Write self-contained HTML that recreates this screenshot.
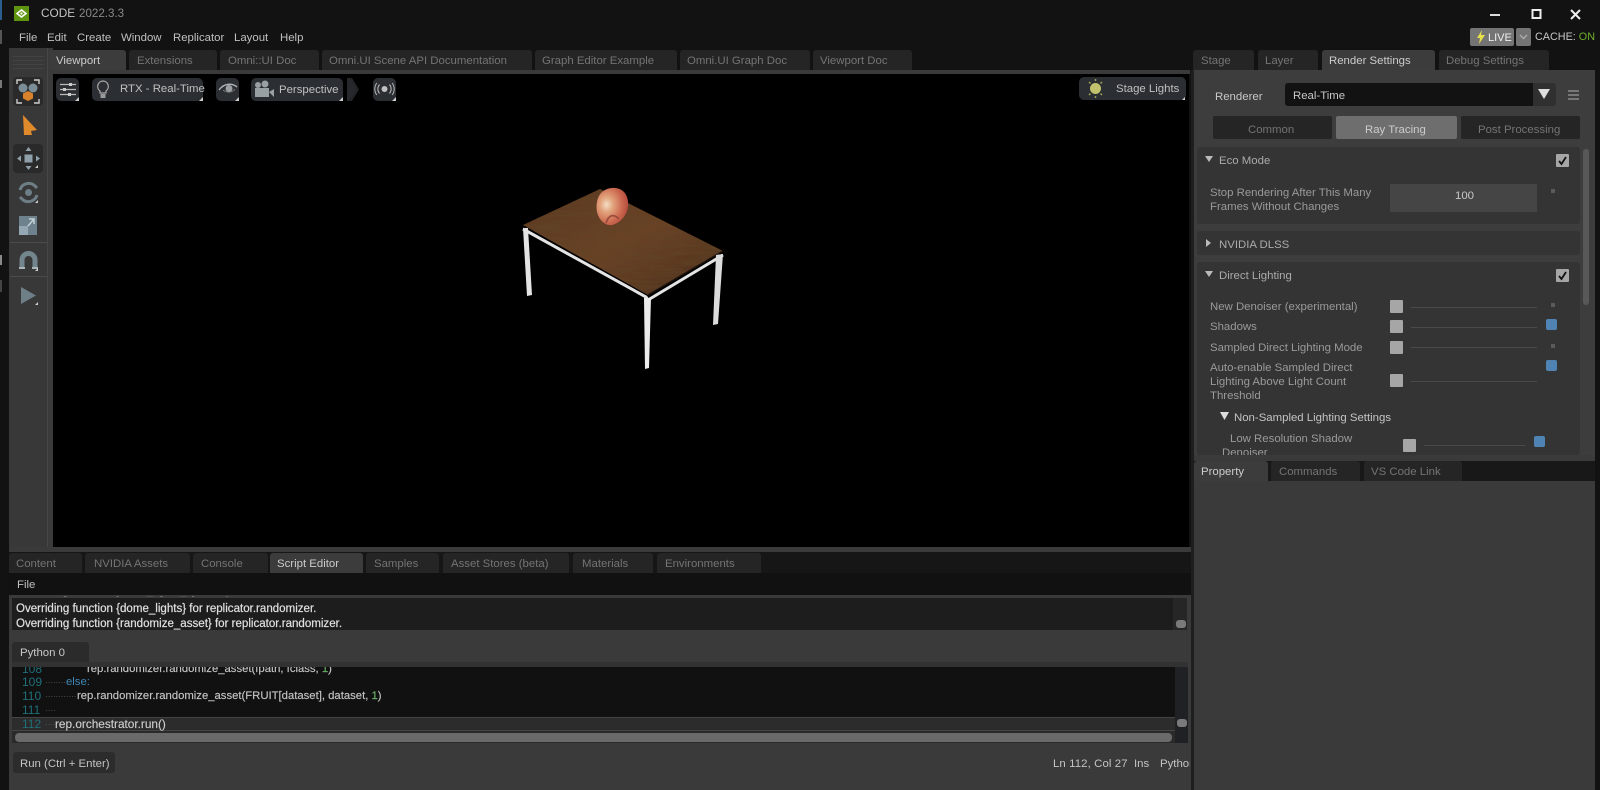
<!DOCTYPE html>
<html><head><meta charset="utf-8"><style>
html,body{margin:0;padding:0;background:#121212;width:1600px;height:790px;overflow:hidden}
body{position:relative;font-family:"Liberation Sans",sans-serif;font-size:11.4px;color:#b8b8b8}
div,span.t{position:absolute;box-sizing:border-box}
.t{line-height:16px;white-space:nowrap;font-size:11.4px;position:absolute;margin-top:1px}
.t.n,.t.code,.t.num,.t.ws{margin-top:0}
.tab{height:20px;background:#252525;border-radius:3px 3px 0 0}
.tab.on{background:#3c3c3c}
.tl{color:#747474}.tw{color:#cccccc}
.tb{background:#2b2e32;border-radius:5px;height:23px;top:78px}
.cn{width:0;height:0;border-bottom:4px solid #ccc;border-left:4px solid transparent}
.cb{width:13px;height:13px;background:#a6a6a6;border-radius:1px}
.bl{width:11px;height:11px;background:#4f83b3;border-radius:2px}
.ln{height:1px;background:#4a4a4a}
.dot{width:4px;height:4px;background:#5a5a5a}
.code{font-size:11.3px;color:#c4c4c4;-webkit-text-stroke:.15px #c4c4c4}
.num{color:#1f6f7a;font-size:12px}
.ws{color:#505050;letter-spacing:-.4px;font-size:9px}
.lb{color:#9a9a9a}
.hd{color:#ababab}
</style></head><body>

<!-- left sliver -->
<div style="left:0;top:0;width:2px;height:20px;background:#2a5c8c"></div>
<div style="left:0;top:30px;width:2px;height:14px;background:#555"></div>
<div style="left:0;top:80px;width:2px;height:8px;background:#777"></div>
<div style="left:0;top:255px;width:2px;height:10px;background:#888"></div>
<div style="left:0;top:280px;width:2px;height:12px;background:#444"></div>

<!-- Title bar -->
<svg style="position:absolute;left:14px;top:6px" width="15" height="15"><rect width="15" height="15" fill="#5f9410"/><path d="M3 7.5L7.5 4 12 7.5 7.5 11z" fill="none" stroke="#fff" stroke-width="1.6"/><circle cx="7.5" cy="7.5" r="1.1" fill="#fff"/></svg>
<span class="t n" style="left:41px;top:5px;font-size:11.8px;color:#c4c4c4">CODE</span>
<span class="t" style="left:79px;top:5px;font-size:11.6px;color:#888">2022.3.3</span>
<span class="t n" style="left:19px;top:30px;color:#c0c0c0">File</span>
<span class="t n" style="left:47px;top:30px;color:#c0c0c0">Edit</span>
<span class="t n" style="left:77px;top:30px;color:#c0c0c0">Create</span>
<span class="t n" style="left:121px;top:30px;color:#c0c0c0">Window</span>
<span class="t n" style="left:173px;top:30px;color:#c0c0c0">Replicator</span>
<span class="t n" style="left:234px;top:30px;color:#c0c0c0">Layout</span>
<span class="t n" style="left:280px;top:30px;color:#c0c0c0">Help</span>

<svg style="position:absolute;left:1485px;top:6px" width="105" height="16"><path d="M5 9h10" stroke="#ddd" stroke-width="2"/><rect x="47.5" y="4" width="8" height="8" fill="none" stroke="#eee" stroke-width="2"/><path d="M86 4l9 9M95 4l-9 9" stroke="#eee" stroke-width="2"/></svg>
<div style="left:1470px;top:28px;width:44px;height:18px;background:#747474;border-radius:2px"></div>
<svg style="position:absolute;left:1476px;top:30px" width="10" height="14"><path d="M6 0L1 8h3L3 14 9 5H5z" fill="#e6e04a"/></svg>
<span class="t" style="left:1488px;top:29px;color:#eee;font-size:11px">LIVE</span>
<div style="left:1516px;top:28px;width:15px;height:18px;background:#747474;border-radius:2px"></div>
<svg style="position:absolute;left:1519px;top:34px" width="9" height="6"><path d="M1 1l3.5 3.5L8 1" fill="none" stroke="#aaa" stroke-width="1.5"/></svg>
<span class="t n" style="left:1535px;top:29px;color:#c8c8c8;font-size:10.8px">CACHE: <span style="color:#6fae2c">ON</span></span>

<!-- Left toolbar -->
<div style="left:9px;top:48px;width:44px;height:504px;background:#3a3a3a"></div>
<div style="left:9px;top:48px;width:39px;height:504px;background:#383838;border-right:1px solid #464646"></div>
<div style="left:13px;top:56px;width:31px;height:1px;background:#434343;box-shadow:0 4px #434343,0 8px #434343,0 12px #434343"></div>
<div style="left:13px;top:77px;width:30px;height:29px;background:#2a2a2a;border-radius:4px"></div>
<svg style="position:absolute;left:13px;top:77px" width="30" height="29"><path d="M4 7V3h5M21 3h5v4M4 22v4h5M21 26h5v-4" fill="none" stroke="#cfcfcf" stroke-width="1.4"/><circle cx="10" cy="11" r="4.5" fill="#7b8d97"/><circle cx="20" cy="11" r="4.5" fill="#7b8d97"/><path d="M15 14l5 2.5v5L15 24l-5-2.5v-5z" fill="#d9822b"/></svg>
<svg style="position:absolute;left:20px;top:114px" width="18" height="24"><path d="M3 1L17 16L11 17L12 21L4 21Z" fill="#e08a2c"/></svg>
<div style="left:13px;top:144px;width:30px;height:29px;background:#2a2a2a;border-radius:4px"></div>
<svg style="position:absolute;left:17px;top:147px" width="23" height="23"><rect x="7.5" y="7.5" width="8" height="8" fill="#8fa0aa"/><path d="M11.5 0l3 4h-6zM11.5 23l3-4h-6zM0 11.5l4-3v6zM23 11.5l-4-3v6z" fill="#8fa0aa"/></svg>
<svg style="position:absolute;left:17px;top:181px" width="23" height="23"><path d="M3 9a9 9 0 0 1 15-4l2 2M20 14a9 9 0 0 1-15 4l-2-2" fill="none" stroke="#6e7e86" stroke-width="3"/><circle cx="11.5" cy="11.5" r="3.5" fill="#6e7e86"/></svg>
<svg style="position:absolute;left:19px;top:216px" width="18" height="19"><rect width="18" height="19" fill="#6d828c"/><rect width="9" height="9" x="0" y="10" fill="#93a8b2"/><path d="M9 10l6-7M10 3h5v5" fill="none" stroke="#c4d0d6" stroke-width="1.5"/></svg>
<div style="left:10px;top:242px;width:37px;height:1px;background:#4b4b4b"></div>
<svg style="position:absolute;left:19px;top:250px" width="19" height="21"><path d="M3 17V10a6.5 6.5 0 0 1 13 0v7" fill="none" stroke="#74868d" stroke-width="5"/><path d="M0 18h6M13 18h6" stroke="#aab6bb" stroke-width="2"/></svg>
<div style="left:10px;top:276px;width:37px;height:1px;background:#4b4b4b"></div>
<svg style="position:absolute;left:20px;top:286px" width="17" height="19"><path d="M1 1l15 8.5L1 18z" fill="#6e7f88"/></svg>
<div class="cn" style="left:35px;top:165px;border-bottom-width:3px;border-left-width:3px"></div>
<div class="cn" style="left:35px;top:200px;border-bottom-width:3px;border-left-width:3px"></div>
<div class="cn" style="left:35px;top:268px;border-bottom-width:3px;border-left-width:3px"></div>
<div class="cn" style="left:35px;top:302px;border-bottom-width:3px;border-left-width:3px"></div>

<!-- Top tabs -->
<div style="left:49px;top:70px;width:1141px;height:4px;background:#3a3a3a"></div>
<div class="tab on" style="left:49px;top:50px;width:77px"></div><span class="t tw" style="left:56px;top:52px">Viewport</span>
<div class="tab" style="left:129px;top:50px;width:88px"></div><span class="t tl" style="left:137px;top:52px">Extensions</span>
<div class="tab" style="left:220px;top:50px;width:99px"></div><span class="t tl" style="left:228px;top:52px">Omni::UI Doc</span>
<div class="tab" style="left:322px;top:50px;width:210px"></div><span class="t tl" style="left:329px;top:52px">Omni.UI Scene API Documentation</span>
<div class="tab" style="left:535px;top:50px;width:142px"></div><span class="t tl" style="left:542px;top:52px">Graph Editor Example</span>
<div class="tab" style="left:680px;top:50px;width:130px"></div><span class="t tl" style="left:687px;top:52px">Omni.UI Graph Doc</span>
<div class="tab" style="left:813px;top:50px;width:99px"></div><span class="t tl" style="left:820px;top:52px">Viewport Doc</span>

<!-- Viewport -->
<div style="left:53px;top:74px;width:1136px;height:473px;background:#000"></div>
<div class="tb" style="left:56px;width:23px"></div>
<svg style="position:absolute;left:59px;top:82px" width="18" height="15"><path d="M1 2.5h16M1 7.5h16M1 12.5h16" stroke="#bbb" stroke-width="1.3"/><rect x="10" y="1" width="3" height="3" fill="#ccc"/><rect x="4" y="6" width="3" height="3" fill="#ccc"/><rect x="9" y="11" width="3" height="3" fill="#ccc"/></svg>
<div class="tb" style="left:92px;width:111px"></div>
<svg style="position:absolute;left:96px;top:80px" width="14" height="19"><path d="M7 1a5.5 5.5 0 0 0-3 10v2h6v-2A5.5 5.5 0 0 0 7 1z" fill="none" stroke="#aaa" stroke-width="1.2"/><rect x="4.5" y="14" width="5" height="4" fill="#999"/></svg>
<span class="t n" style="left:120px;top:81px;color:#c0c0c0">RTX - Real-Time</span>
<div class="tb" style="left:216px;width:23px"></div>
<svg style="position:absolute;left:218px;top:82px" width="20" height="14"><path d="M1 8C6 1 14 1 19 5" fill="none" stroke="#aab0b4" stroke-width="1.5"/><path d="M5 8C9 11 14 11 17 7" fill="none" stroke="#777" stroke-width="1"/><circle cx="11" cy="6.5" r="3.5" fill="#9aa0a4"/></svg>
<div class="tb" style="left:251px;width:92px"></div>
<svg style="position:absolute;left:253px;top:80px" width="21" height="19"><circle cx="5" cy="5" r="3" fill="#98a0a4"/><circle cx="12" cy="4" r="3.5" fill="#98a0a4"/><rect x="2" y="8" width="14" height="9" fill="#98a0a4"/><path d="M16 12l5-3v8z" fill="#98a0a4"/></svg>
<span class="t n" style="left:279px;top:82px;color:#c0c0c0">Perspective</span>
<svg style="position:absolute;left:346px;top:78px" width="16" height="23"><path d="M1 0h3l7 11.5L4 23H1z" fill="#26282b"/><path d="M5 0l7 11.5L5 23" fill="none" stroke="#26282b" stroke-width="1.5"/></svg>
<div class="tb" style="left:373px;width:23px"></div>
<svg style="position:absolute;left:374px;top:82px" width="21" height="14"><circle cx="10.5" cy="7" r="3" fill="#c0c0c0"/><path d="M5.5 2.5a7 7 0 0 0 0 9M15.5 2.5a7 7 0 0 1 0 9M2.8 1a10 10 0 0 0 0 12M18.2 1a10 10 0 0 1 0 12" fill="none" stroke="#bbb" stroke-width="1"/></svg>
<div class="tb" style="left:1079px;width:107px;top:77px"></div>
<svg style="position:absolute;left:1086px;top:79px" width="19" height="19"><circle cx="9.5" cy="9.5" r="5.5" fill="#c2c26c"/><path d="M9.5 0v2M9.5 17v2M3 3l1.5 1.5M16 3l-1.5 1.5M3 16l1.5-1.5M16 16l-1.5-1.5" stroke="#9c9c54" stroke-width="1.5"/></svg>
<span class="t n" style="left:1116px;top:81px;color:#c0c0c0">Stage Lights</span>
<div class="cn" style="left:75px;top:97px"></div><div class="cn" style="left:199px;top:97px"></div><div class="cn" style="left:235px;top:97px"></div><div class="cn" style="left:339px;top:97px"></div><div class="cn" style="left:392px;top:97px"></div><div class="cn" style="left:1182px;top:97px;border-bottom-width:3px;border-left-width:3px"></div>

<!-- Table and apple -->
<svg style="position:absolute;left:0;top:0" width="1600" height="790">
<defs>
<linearGradient id="w" x1="0" y1="0" x2="1" y2="1"><stop offset="0" stop-color="#563622"/><stop offset=".5" stop-color="#6c4328"/><stop offset="1" stop-color="#472c1c"/></linearGradient>
<radialGradient id="a" cx=".32" cy=".45" r=".8"><stop offset="0" stop-color="#f4ddc6"/><stop offset=".25" stop-color="#e2a57e"/><stop offset=".6" stop-color="#cc6a50"/><stop offset="1" stop-color="#a83a34"/></radialGradient>
<filter id="g"><feTurbulence type="fractalNoise" baseFrequency=".03 .35" numOctaves="3" seed="4"/><feColorMatrix values="0 0 0 0 .12 0 0 0 0 .06 0 0 0 0 .02 1.1 0 0 0 -.2"/><feComposite in2="SourceGraphic" operator="in"/><feMerge><feMergeNode in="SourceGraphic"/><feMergeNode/></feMerge></filter>
</defs>
<path d="M523 225L600 189L723 251L648 295Z" fill="url(#w)" filter="url(#g)"/>
<path d="M648 295L723 251" stroke="#1c120c" stroke-width="1.5"/>
<path d="M523 229L646 297L648 300L723 255" fill="none" stroke="#e4e4e4" stroke-width="3"/>
<path d="M523 228L528 228L532 295L527 296Z" fill="#e4e4e4"/>
<path d="M644 298L651 298L649 368L645 369Z" fill="#ececec"/>
<path d="M716 255L723 254L718 324L713 325Z" fill="#dcdcdc"/>
<path d="M612 188C625 187 629 198 628 206C627 216 620 223 612 225C605 226 599 220 597 212C595 199 600 189 612 188Z" fill="url(#a)"/>
<path d="M606 223C609 214 614 214 619 219" fill="none" stroke="#9c4c3c" stroke-width="1.8"/>
</svg>

<!-- Bottom panel -->
<div style="left:9px;top:547px;width:1183px;height:243px;background:#3a3a3a"></div>
<div style="left:9px;top:552px;width:1183px;height:21px;background:#161616"></div>
<div class="tab" style="left:9px;top:553px;width:73px"></div><span class="t tl" style="left:16px;top:555px">Content</span>
<div class="tab" style="left:85px;top:553px;width:105px"></div><span class="t tl" style="left:94px;top:555px">NVIDIA Assets</span>
<div class="tab" style="left:193px;top:553px;width:75px"></div><span class="t tl" style="left:201px;top:555px">Console</span>
<div class="tab on" style="left:270px;top:553px;width:93px"></div><span class="t tw" style="left:277px;top:555px">Script Editor</span>
<div class="tab" style="left:366px;top:553px;width:73px"></div><span class="t tl" style="left:374px;top:555px">Samples</span>
<div class="tab" style="left:443px;top:553px;width:126px"></div><span class="t tl" style="left:451px;top:555px">Asset Stores (beta)</span>
<div class="tab" style="left:573px;top:553px;width:80px"></div><span class="t tl" style="left:582px;top:555px">Materials</span>
<div class="tab" style="left:657px;top:553px;width:104px"></div><span class="t tl" style="left:665px;top:555px">Environments</span>
<div style="left:9px;top:573px;width:1183px;height:22px;background:#111"></div>
<span class="t n" style="left:17px;top:577px;color:#c0c0c0">File</span>

<div style="left:12px;top:598px;width:1175px;height:32px;background:#1d1d1d"></div>
<div style="left:16px;top:596px;width:260px;height:3px;overflow:hidden"><span class="t n" style="left:0;top:-13px;color:#bbb">Overriding function {dome_lights_x} for replicator</span></div>
<div style="left:1173px;top:598px;width:14px;height:32px;background:#262626"></div>
<div style="left:1176px;top:620px;width:10px;height:8px;background:#7a7a7a;border-radius:3px"></div>
<span class="t" style="left:16px;top:600px;color:#e0e0e0;font-size:11.55px;-webkit-text-stroke:.2px #e0e0e0">Overriding function {dome_lights} for replicator.randomizer.</span>
<span class="t" style="left:16px;top:615px;color:#e0e0e0;font-size:11.55px;-webkit-text-stroke:.2px #e0e0e0">Overriding function {randomize_asset} for replicator.randomizer.</span>

<div style="left:12px;top:642px;width:77px;height:20px;background:#2b2b2b;border-radius:3px 3px 0 0"></div>
<span class="t" style="left:20px;top:644px;color:#c8c8c8">Python 0</span>
<div style="left:12px;top:662px;width:1176px;height:5px;background:#323232"></div>

<div style="left:12px;top:667px;width:1176px;height:76px;background:#111;overflow:hidden">
  <span class="t num" style="left:10px;top:-6px">108</span>
  <span class="t code" style="left:75px;top:-6px">rep.randomizer.randomize_asset(fpath, fclass, <span style="color:#3fae3f">1</span>)</span>
  <span class="t num" style="left:10px;top:7px">109</span>
  <span class="t ws" style="left:33px;top:7px">········</span>
  <span class="t code" style="left:54px;top:7px;color:#3f87b5;-webkit-text-stroke:0">else:</span>
  <span class="t num" style="left:10px;top:21px">110</span>
  <span class="t ws" style="left:33px;top:21px">············</span>
  <span class="t code" style="left:65px;top:21px">rep.randomizer.randomize_asset(FRUIT[dataset], dataset, <span style="color:#3fae3f">1</span>)</span>
  <span class="t num" style="left:10px;top:35px">111</span>
  <span class="t ws" style="left:33px;top:35px">····</span>
  <div style="left:0;top:50px;width:1163px;height:14px;background:#2c2c2c;border-top:1px solid #444;border-bottom:1px solid #444"></div>
  <span class="t num" style="left:10px;top:49px">112</span>
  <span class="t ws" style="left:33px;top:49px">····</span>
  <span class="t code" style="left:43px;top:49px;color:#d0d0d0;font-size:11.8px">rep.orchestrator.run()</span>
  <div style="left:1163px;top:0;width:13px;height:76px;background:#1f2124"></div>
  <div style="left:1165px;top:52px;width:10px;height:8px;background:#7a7a7a;border-radius:3px"></div>
  <div style="left:0;top:64px;width:1163px;height:12px;background:#2a2a2a"></div>
  <div style="left:3px;top:66px;width:1157px;height:9px;background:#6a6a6a;border-radius:4px"></div>
</div>

<div style="left:13px;top:752px;width:102px;height:21px;background:#2c2c2c;border-radius:3px"></div>
<span class="t" style="left:20px;top:755px;color:#c4c4c4">Run (Ctrl + Enter)</span>
<span class="t" style="left:1053px;top:755px;color:#c4c4c4;letter-spacing:.1px">Ln 112, Col 27</span>
<span class="t" style="left:1134px;top:755px;color:#c4c4c4">Ins</span>
<div style="left:1160px;top:752px;width:30px;height:22px;overflow:hidden"><span class="t" style="left:0;top:3px;color:#c4c4c4">Python</span></div>

<div style="left:1191px;top:70px;width:3px;height:720px;background:#1e1e1e"></div>

<!-- Right panel -->
<div style="left:1194px;top:70px;width:401px;height:385px;background:#3d3d3d"></div>
<div class="tab" style="left:1193px;top:50px;width:61px"></div><span class="t tl" style="left:1201px;top:52px">Stage</span>
<div class="tab" style="left:1258px;top:50px;width:60px"></div><span class="t tl" style="left:1265px;top:52px">Layer</span>
<div class="tab on" style="left:1322px;top:50px;width:113px"></div><span class="t tw" style="left:1329px;top:52px">Render Settings</span>
<div class="tab" style="left:1439px;top:50px;width:110px"></div><span class="t tl" style="left:1446px;top:52px">Debug Settings</span>

<span class="t" style="left:1215px;top:88px;color:#c8c8c8">Renderer</span>
<div style="left:1285px;top:83px;width:271px;height:23px;background:#303030;border-radius:3px"></div>
<div style="left:1285px;top:83px;width:248px;height:23px;background:#121212;border-radius:3px 0 0 3px"></div>
<span class="t" style="left:1293px;top:87px;color:#c8c8c8">Real-Time</span>
<svg style="position:absolute;left:1538px;top:89px" width="12" height="11"><path d="M0 0h12L6 10z" fill="#ddd"/></svg>
<div style="left:1568px;top:90px;width:11px;height:2px;background:#777;box-shadow:0 4px #777,0 8px #777"></div>
<div style="left:1213px;top:116px;width:119px;height:23px;background:#252525;border-radius:2px"></div>
<span class="t" style="left:1248px;top:121px;color:#747474">Common</span>
<div style="left:1336px;top:116px;width:121px;height:23px;background:#6e6e6e;border-radius:2px"></div>
<span class="t" style="left:1365px;top:121px;color:#cccccc">Ray Tracing</span>
<div style="left:1461px;top:116px;width:119px;height:23px;background:#252525;border-radius:2px"></div>
<span class="t" style="left:1478px;top:121px;color:#747474">Post Processing</span>

<div style="left:1197px;top:147px;width:383px;height:77px;background:#343434;border-radius:3px"></div>
<div style="left:1197px;top:231px;width:383px;height:24px;background:#343434;border-radius:3px"></div>
<div style="left:1197px;top:262px;width:383px;height:193px;background:#343434;border-radius:3px"></div>
<div style="left:1583px;top:149px;width:6px;height:156px;background:#585858;border-radius:3px"></div>

<svg style="position:absolute;left:1205px;top:156px" width="8" height="7"><path d="M0 0h8L4 6z" fill="#bbb"/></svg>
<span class="t hd" style="left:1219px;top:152px">Eco Mode</span>
<div class="cb" style="left:1556px;top:154px"></div>
<svg style="position:absolute;left:1557px;top:155px" width="11" height="11"><path d="M2 6l2.5 3L9 2" fill="none" stroke="#111" stroke-width="1.8"/></svg>
<span class="t lb" style="left:1210px;top:184px">Stop Rendering After This Many</span>
<span class="t lb" style="left:1210px;top:198px">Frames Without Changes</span>
<div style="left:1390px;top:184px;width:147px;height:28px;background:#454545"></div>
<span class="t" style="left:1455px;top:187px;color:#c8c8c8">100</span>
<div class="dot" style="left:1551px;top:189px"></div>

<svg style="position:absolute;left:1206px;top:239px" width="6" height="8"><path d="M0 0v8l5-4z" fill="#bbb"/></svg>
<span class="t hd" style="left:1219px;top:236px">NVIDIA DLSS</span>

<svg style="position:absolute;left:1205px;top:271px" width="8" height="7"><path d="M0 0h8L4 6z" fill="#bbb"/></svg>
<span class="t hd" style="left:1219px;top:267px">Direct Lighting</span>
<div class="cb" style="left:1556px;top:269px"></div>
<svg style="position:absolute;left:1557px;top:270px" width="11" height="11"><path d="M2 6l2.5 3L9 2" fill="none" stroke="#111" stroke-width="1.8"/></svg>

<span class="t lb" style="left:1210px;top:298px">New Denoiser (experimental)</span>
<div class="cb" style="left:1390px;top:300px"></div><div class="ln" style="left:1411px;top:307px;width:126px"></div><div class="dot" style="left:1551px;top:303px"></div>
<span class="t lb" style="left:1210px;top:318px">Shadows</span>
<div class="cb" style="left:1390px;top:320px"></div><div class="ln" style="left:1411px;top:327px;width:126px"></div><div class="bl" style="left:1546px;top:319px"></div>
<span class="t lb" style="left:1210px;top:339px">Sampled Direct Lighting Mode</span>
<div class="cb" style="left:1390px;top:341px"></div><div class="ln" style="left:1411px;top:347px;width:126px"></div><div class="dot" style="left:1551px;top:344px"></div>
<span class="t lb" style="left:1210px;top:359px">Auto-enable Sampled Direct</span>
<span class="t lb" style="left:1210px;top:373px">Lighting Above Light Count</span>
<span class="t lb" style="left:1210px;top:387px">Threshold</span>
<div class="cb" style="left:1390px;top:374px"></div><div class="ln" style="left:1411px;top:381px;width:126px"></div><div class="bl" style="left:1546px;top:360px"></div>
<svg style="position:absolute;left:1220px;top:412px" width="9" height="8"><path d="M0 0h9L4.5 8z" fill="#ddd"/></svg>
<span class="t" style="left:1234px;top:409px;color:#c4c4c4">Non-Sampled Lighting Settings</span>
<span class="t lb" style="left:1230px;top:430px">Low Resolution Shadow</span>
<div style="left:1222px;top:445px;width:60px;height:10px;overflow:hidden"><span class="t lb n" style="left:0;top:0">Denoiser</span></div>
<div class="cb" style="left:1403px;top:439px"></div><div class="ln" style="left:1424px;top:445px;width:101px"></div><div class="bl" style="left:1534px;top:436px"></div>

<!-- Property -->
<div style="left:1194px;top:455px;width:401px;height:335px;background:#3a3a3a"></div>
<div style="left:1194px;top:461px;width:401px;height:20px;background:#181818"></div>
<div class="tab on" style="left:1194px;top:461px;width:74px"></div><span class="t tw" style="left:1201px;top:463px">Property</span>
<div class="tab" style="left:1271px;top:461px;width:89px"></div><span class="t tl" style="left:1279px;top:463px">Commands</span>
<div class="tab" style="left:1364px;top:461px;width:98px"></div><span class="t tl" style="left:1371px;top:463px">VS Code Link</span>
</body></html>
